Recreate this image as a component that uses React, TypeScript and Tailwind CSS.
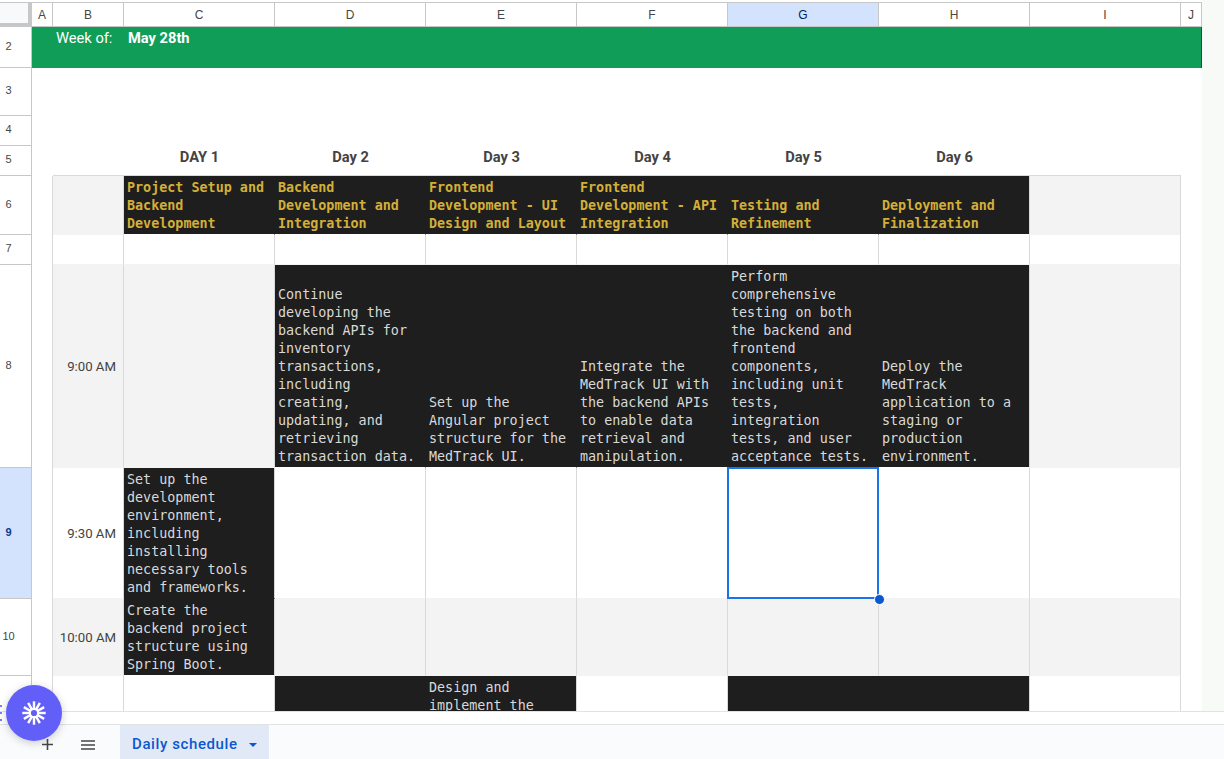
import React from "react";

type Kind = "w" | "g" | "k";
type Cell = { kind: Kind; text?: string; head?: boolean; top?: boolean; selected?: boolean };
type Row = { n: number; label?: string; blackLine?: boolean; cells: Cell[]; selected?: boolean };

const w: Cell = { kind: "w" };
const g: Cell = { kind: "g" };
const k = (text = "", top = false): Cell => ({ kind: "k", text, top });
const h = (text = ""): Cell => ({ kind: "k", text, head: true });

const rows: Row[] = [
  {
    n: 6,
    cells: [
      h("Project Setup and Backend Development"),
      h("Backend Development and Integration"),
      h("Frontend Development - UI Design and Layout"),
      h("Frontend Development - API Integration"),
      h("Testing and Refinement"),
      h("Deployment and Finalization"),
      g,
    ],
  },
  { n: 7, cells: [w, w, w, w, w, w, w] },
  {
    n: 8,
    label: "9:00 AM",
    cells: [
      g,
      k("Continue developing the backend APIs for inventory transactions, including creating, updating, and retrieving transaction data."),
      k("Set up the Angular project structure for the MedTrack UI."),
      k("Integrate the MedTrack UI with the backend APIs to enable data retrieval and manipulation."),
      k("Perform comprehensive testing on both the backend and frontend components, including unit tests, integration tests, and user acceptance tests."),
      k("Deploy the MedTrack application to a staging or production environment."),
      g,
    ],
  },
  {
    n: 9,
    label: "9:30 AM",
    blackLine: true,
    selected: true,
    cells: [
      k("Set up the development environment, including installing necessary tools and frameworks."),
      w,
      w,
      w,
      { kind: "w", selected: true },
      w,
      w,
    ],
  },
  {
    n: 10,
    label: "10:00 AM",
    cells: [k("Create the backend project structure using Spring Boot."), g, g, g, g, g, g],
  },
  {
    n: 11,
    cells: [w, k(), k("Design and implement the", true), w, k(), k(), w],
  },
];

const mono = "font-['DejaVu_Sans_Mono','Liberation_Mono',monospace]";
const letterCols = ["A", "B", "C", "D", "E", "F", "G", "H", "I", "J"];
const days = ["DAY 1", "Day 2", "Day 3", "Day 4", "Day 5", "Day 6"];

function RowNumber({ n, active }: { n: number; active?: boolean }) {
  return (
    <div
      className={`flex items-center justify-center pr-[14px] pb-[2px] border-r border-b border-[#c7c7c7] font-['Liberation_Sans',sans-serif] text-[11px] ${
        active ? "bg-[#d3e3fd] font-bold text-[#0b3a8c]" : "bg-white text-[#444746]"
      }`}
    >
      {n === 11 ? null : n}
    </div>
  );
}

function Gutter() {
  return <div className="bg-[#f8faf8]" />;
}

function TimeCell({ row }: { row: Row }) {
  const grey = row.n === 6 || row.n === 8 || row.n === 10;
  return (
    <div
      className={`flex items-center justify-end pr-[7px] pt-[2px] border-r border-b border-r-[#d9d9d9] font-['Roboto',sans-serif] text-[13.2px] text-[#434343] ${
        grey ? "bg-[#f3f3f3] border-b-[#f3f3f3]" : row.n === 11 ? "bg-white border-b-white" : "bg-white border-b-[#f3f3f3]"
      }`}
    >
      {row.label}
    </div>
  );
}

function DataCell({ cell, next, row }: { cell: Cell; next?: Cell; row: Row }) {
  if (cell.kind === "k") {
    const right = next?.kind === "k" ? "border-r-[#1e1e1e]" : "border-r-[#d9d9d9]";
    const bottom = row.blackLine || row.n === 11 ? "border-b-[#1e1e1e]" : "border-b-white";
    return (
      <div
        className={`flex flex-col overflow-hidden bg-[#1e1e1e] border-r border-b pl-[3px] pr-[4px] pb-[1px] text-[13.4px] leading-[18px] ${mono} ${right} ${bottom} ${
          cell.top ? "justify-start pt-[3px]" : "justify-end pt-0"
        } ${cell.head ? "font-bold text-[#d4af37]" : "text-[#d9d9d9]"}`}
      >
        <span>{cell.text}</span>
      </div>
    );
  }
  const bg = cell.kind === "g" ? "bg-[#f3f3f3] border-b-[#f3f3f3]" : row.n === 11 ? "bg-white border-b-white" : "bg-white border-b-[#f3f3f3]";
  return (
    <div className={`relative border-r border-b border-r-[#d9d9d9] ${bg}`}>
      {cell.selected && (
        <div className="absolute left-[-1px] top-[-1px] w-[152px] h-[132px] border-2 border-[#1a73e8] z-10">
          <span className="absolute right-[-8px] bottom-[-8px] w-[11px] h-[11px] rounded-full bg-[#0b57d0] border border-white" />
        </div>
      )}
    </div>
  );
}

function Spark() {
  const spokes = Array.from({ length: 12 }, (_, i) => i * 30);
  return (
    <svg width="24" height="24" viewBox="0 0 24 24" aria-hidden="true">
      {spokes.map((a) => (
        <line
          key={a}
          x1="12"
          y1="8"
          x2="12"
          y2="0.3"
          stroke="white"
          strokeWidth="2.4"
          transform={`rotate(${a} 12 12)`}
        />
      ))}
      <circle cx="12" cy="12" r="4.2" fill="none" stroke="white" strokeWidth="2.2" />
    </svg>
  );
}

export default function App() {
  return (
    <div className="relative w-[1224px] h-[759px] overflow-hidden bg-white flex flex-col font-['Roboto',sans-serif]">
      <div className="h-[711px] overflow-hidden grid grid-cols-[32px_21px_71px_151px_151px_151px_151px_151px_151px_151px_21px_22px] grid-rows-[27px_41px_48px_30px_30px_59px_30px_203px_131px_77px_36px]">
        {/* column headers */}
        <div className="mt-[2px] bg-[#c7c7c7] pr-[4px] pb-[4px] pt-px">
          <div className="h-full bg-[#f8f9fa]" />
        </div>
        {letterCols.map((c) => (
          <div
            key={c}
            className={`mt-[2px] flex items-center justify-center border-t border-r border-b border-[#c7c7c7] font-['Liberation_Sans',sans-serif] text-[12px] ${
              c === "G" ? "bg-[#d3e3fd] text-[#041e49]" : "bg-white text-[#444746]"
            }`}
          >
            {c}
          </div>
        ))}
        <Gutter />

        {/* row 2 */}
        <RowNumber n={2} />
        <div className="col-span-10 flex items-start pl-[24px] pt-[2px] bg-[#0f9d58] border-r border-r-[#0b5a34] text-[14.67px] leading-[18px] text-white">
          <span className="w-[72px]">Week of:</span>
          <span className="font-bold">May 28th</span>
        </div>
        <Gutter />

        {/* rows 3 and 4 */}
        <RowNumber n={3} />
        <div className="col-span-10 bg-white" />
        <Gutter />
        <RowNumber n={4} />
        <div className="col-span-10 bg-white" />
        <Gutter />

        {/* row 5 */}
        <RowNumber n={5} />
        <div className="bg-white" />
        <div className="bg-white border-b border-[#d9d9d9]" />
        {days.map((d) => (
          <div
            key={d}
            className="bg-white border-b border-[#d9d9d9] text-center text-[14.67px] leading-5 font-bold text-[#434343] pt-px"
          >
            {d}
          </div>
        ))}
        <div className="bg-white border-b border-[#d9d9d9]" />
        <div className="bg-white" />
        <Gutter />

        {/* table rows */}
        {rows.map((row) => (
          <React.Fragment key={row.n}>
            <RowNumber n={row.n} active={row.selected} />
            <div className="bg-white border-r border-[#d9d9d9]" />
            <TimeCell row={row} />
            {row.cells.map((cell, i) => (
              <DataCell key={i} cell={cell} next={row.cells[i + 1]} row={row} />
            ))}
            <div className="bg-white" />
            <Gutter />
          </React.Fragment>
        ))}
      </div>

      {/* strip under the grid */}
      <div className="h-[13px] bg-white border-t border-[#e1e3e1]" />

      {/* sheet tabs */}
      <div className="flex-1 flex items-stretch bg-[#f9fbfd] border-t border-[#e1e3e1]">
        <div className="w-[120px] flex items-center pt-[5px]">
          <svg className="ml-[42px]" width="11" height="11" viewBox="0 0 11 11" aria-hidden="true">
            <path d="M5.5 0v11M0 5.5h11" stroke="#444746" strokeWidth="1.6" fill="none" />
          </svg>
          <svg className="ml-[28px]" width="14" height="10" viewBox="0 0 14 10" aria-hidden="true">
            <path d="M0 1h14M0 5h14M0 9h14" stroke="#444746" strokeWidth="1.4" fill="none" />
          </svg>
        </div>
        <div className="w-[149px] flex items-center pl-[12px] pt-[5px] bg-[#e1e9f7] text-[#0b57d0] text-[15px] font-medium tracking-[0.6px]">
          <span>Daily schedule</span>
          <svg className="ml-[11px]" width="8" height="4" viewBox="0 0 8 4" aria-hidden="true">
            <path d="M0 0h8L4 4z" fill="#0b57d0" />
          </svg>
        </div>
      </div>

      {/* marks peeping out beside the floating button */}
      <div className="absolute left-0 top-[705px] flex flex-col gap-[5px]">
        <span className="w-[2px] h-[2px] bg-[#7b7bf5]" />
        <span className="w-[2px] h-[2px] bg-[#7b7bf5]" />
        <span className="w-[2px] h-[2px] bg-[#7b7bf5]" />
      </div>

      {/* floating action button */}
      <div className="absolute left-[6px] top-[685px] w-[56px] h-[56px] rounded-full bg-[#625ff9] flex items-center justify-center shadow-[0_2px_8px_rgba(0,0,0,0.2)] z-20">
        <Spark />
      </div>
    </div>
  );
}
